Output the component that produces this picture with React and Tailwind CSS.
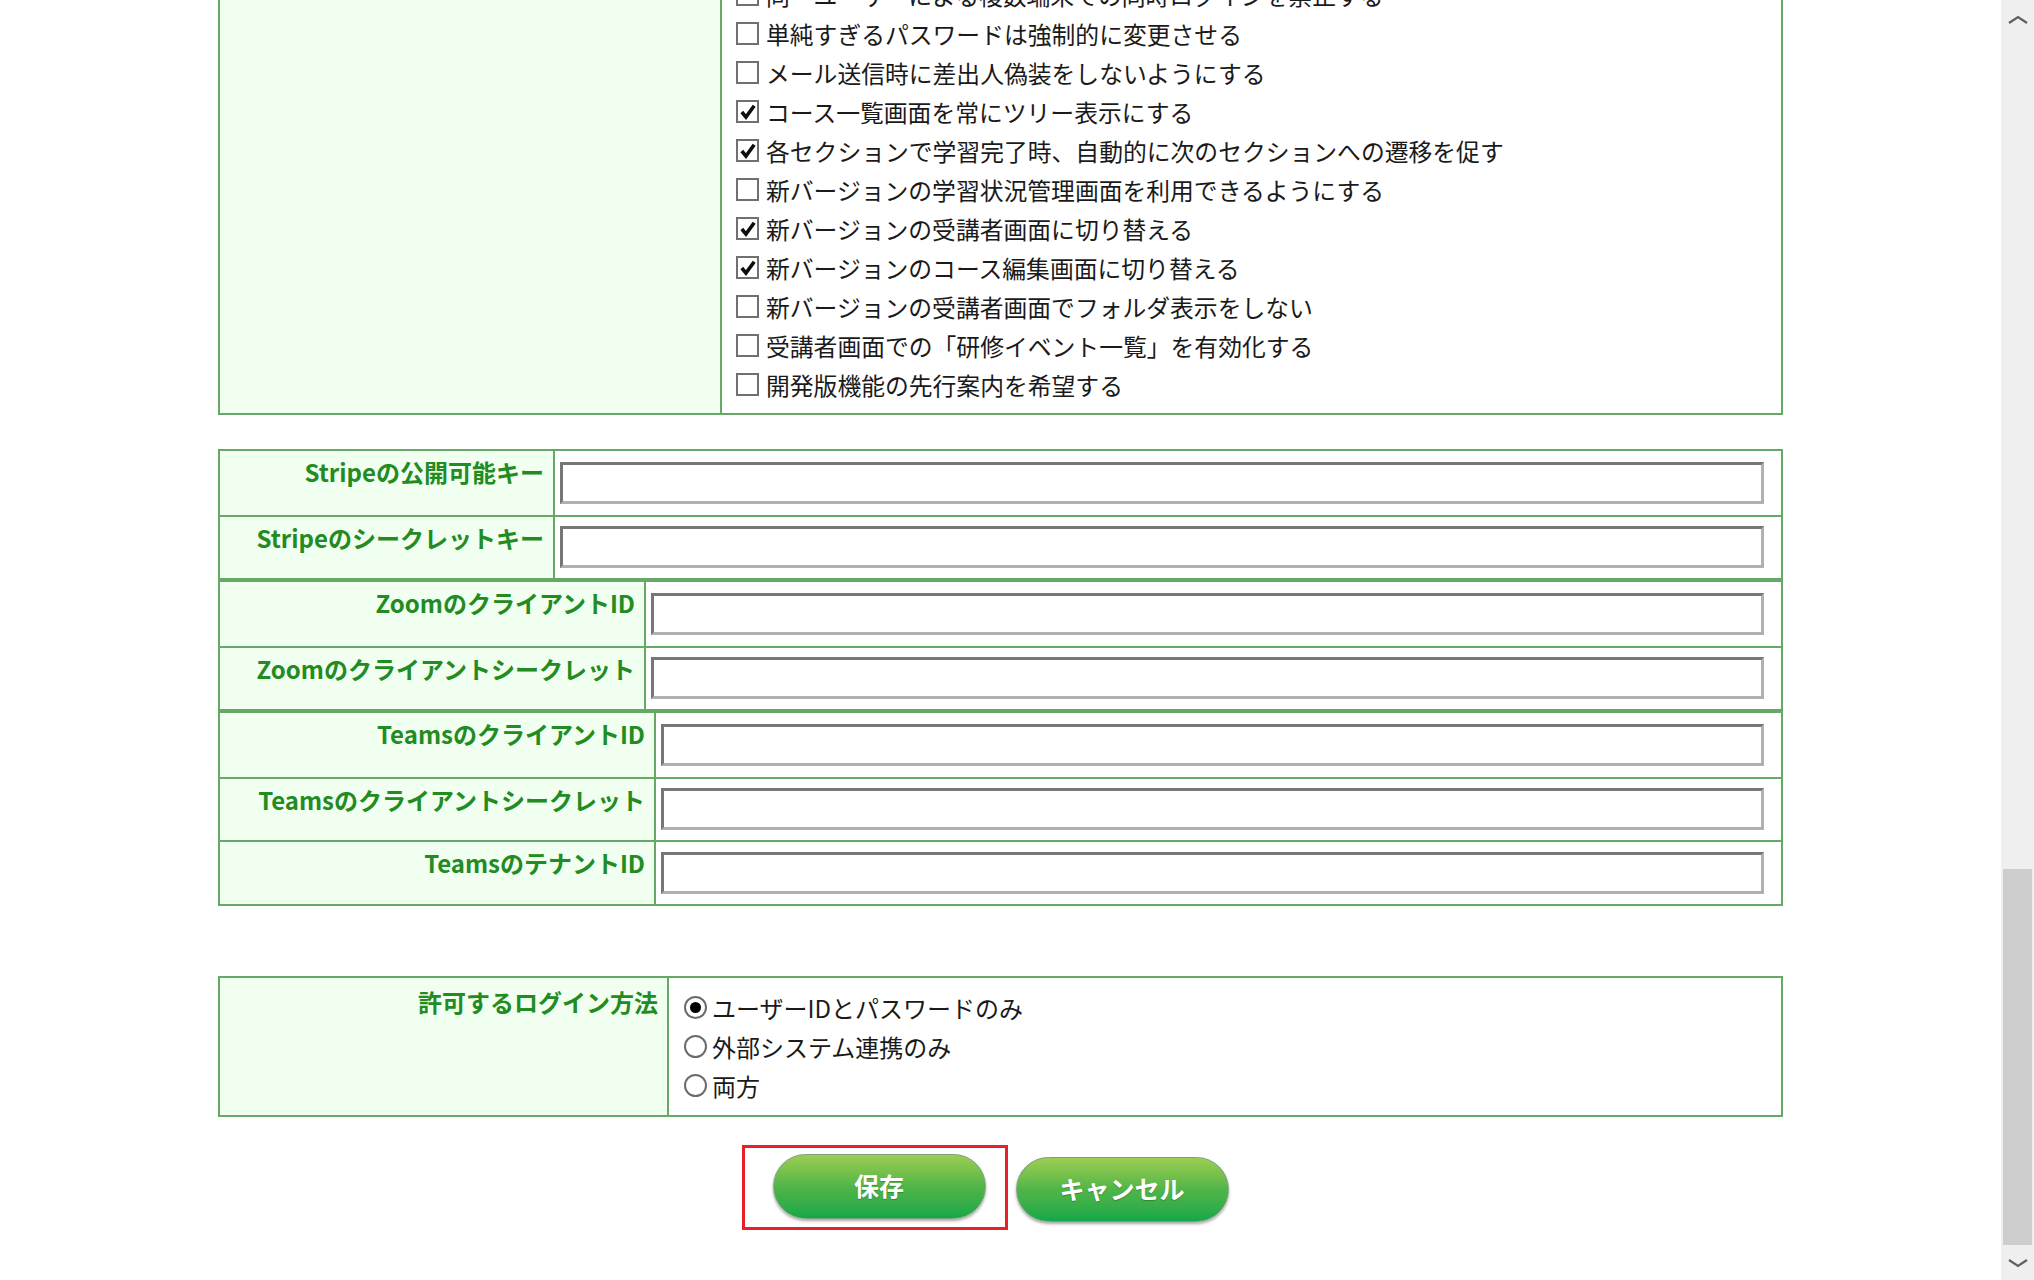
import React from 'react';

const options = [
  ['同一ユーザーによる複数端末での同時ログインを禁止する', false],
  ['単純すぎるパスワードは強制的に変更させる', false],
  ['メール送信時に差出人偽装をしないようにする', false],
  ['コース一覧画面を常にツリー表示にする', true],
  ['各セクションで学習完了時、自動的に次のセクションへの遷移を促す', true],
  ['新バージョンの学習状況管理画面を利用できるようにする', false],
  ['新バージョンの受講者画面に切り替える', true],
  ['新バージョンのコース編集画面に切り替える', true],
  ['新バージョンの受講者画面でフォルダ表示をしない', false],
  ['受講者画面での「研修イベント一覧」を有効化する', false],
  ['開発版機能の先行案内を希望する', false]
];

const keyTables = [
  { cols: 'grid-cols-[335px_1fr]', rows: ['Stripeの公開可能キー', 'Stripeのシークレットキー'] },
  { cols: 'grid-cols-[426px_1fr]', rows: ['ZoomのクライアントID', 'Zoomのクライアントシークレット'] },
  { cols: 'grid-cols-[436px_1fr]', rows: ['TeamsのクライアントID', 'Teamsのクライアントシークレット', 'TeamsのテナントID'] }
];

const logins = ['ユーザーIDとパスワードのみ', '外部システム連携のみ', '両方'];

function CheckBox({ checked }) {
  return (
    <span className="flex h-[23px] w-[23px] shrink-0 items-center justify-center border-2 border-[#707070] bg-white">
      {checked ? (
        <svg viewBox="0 0 16 16" className="h-[18px] w-[18px]">
          <path d="M2.5 8 L6.2 12.5 L13.5 2.5" fill="none" stroke="#0d0d0d" strokeWidth="3.2" />
        </svg>
      ) : null}
    </span>
  );
}

function Radio({ checked }) {
  return (
    <span className="flex h-[23px] w-[23px] shrink-0 items-center justify-center rounded-full border-2 border-[#6b6b6b] bg-white">
      {checked ? <span className="h-[11px] w-[11px] rounded-full bg-black" /> : null}
    </span>
  );
}

function KeyTable({ cols, rows }) {
  return (
    <div className="border-2 border-[#66a866]">
      {rows.map((label, i) => (
        <div key={label} className={`grid ${cols} h-[63.5px] ${i > 0 ? 'border-t-2 border-[#66a866]' : ''}`}>
          <div className="border-r-2 border-[#66a866] bg-[#f0fff0] pr-[9px] pt-[4px] text-right text-[24px] font-bold leading-[34px] text-[#228b22]">
            {label}
          </div>
          <div className="flex items-center pl-[5px] pr-[17px]">
            <input className="h-[42px] w-full border-[3px] border-t-[#767676] border-l-[#767676] border-b-[#b0b0b0] border-r-[#b0b0b0] bg-white outline-none" />
          </div>
        </div>
      ))}
    </div>
  );
}

function GreenButton({ children }) {
  return (
    <button className="h-[65px] w-[213px] rounded-full border border-[#7f9f7f] bg-gradient-to-b from-[#9ccd52] via-[#4fb548] to-[#0fa84a] text-[25px] font-bold text-white shadow-[0_2px_3px_rgba(0,0,0,0.35)] [text-shadow:0_1px_1px_rgba(0,0,0,0.25)]">
      {children}
    </button>
  );
}

export default function App() {
  return (
    <div className="flex h-[1280px] w-full overflow-hidden bg-white font-['Noto_Sans_CJK_JP','Noto_Sans',sans-serif] text-[#1a1a1a]">
      <main className="h-[1280px] flex-1 overflow-hidden">
        <div className="mx-auto mt-[-42px] w-[1565px]">
          <div className="grid grid-cols-[502px_1fr] border-2 border-[#66a866]">
            <div className="border-r-2 border-[#66a866] bg-[#f0fff0]" />
            <div className="pb-[9px] pl-[14px] pt-[15px]">
              {options.map(([text, checked]) => (
                <div key={text} className="flex h-[39px] items-center gap-[7px]">
                  <CheckBox checked={checked} />
                  <span className="text-[23.8px] leading-[39px]">{text}</span>
                </div>
              ))}
            </div>
          </div>

          <div className="mt-[34px]">
            {keyTables.map((t) => (
              <KeyTable key={t.cols} cols={t.cols} rows={t.rows} />
            ))}
          </div>

          <div className="mt-[70px] grid grid-cols-[449px_1fr] border-2 border-[#66a866]">
            <div className="border-r-2 border-[#66a866] bg-[#f0fff0] pr-[9px] pt-[7px] text-right text-[24px] font-bold leading-[34px] text-[#228b22]">
              許可するログイン方法
            </div>
            <div className="pb-[10px] pl-[15px] pt-[10px]">
              {logins.map((text, i) => (
                <div key={text} className="flex h-[39px] items-center gap-[5px]">
                  <Radio checked={i === 0} />
                  <span className="text-[24px] leading-[39px]">{text}</span>
                </div>
              ))}
            </div>
          </div>

          <div className="mt-[37px] flex items-start justify-center gap-[30px]">
            <div className="relative">
              <GreenButton>保存</GreenButton>
              <div className="pointer-events-none absolute bottom-[-11px] left-[-31px] right-[-22px] top-[-9px] border-[3px] border-[#e8202a]" />
            </div>
            <div className="mt-[3px]">
              <GreenButton>キャンセル</GreenButton>
            </div>
          </div>
        </div>
      </main>

      <aside className="flex h-[1280px] w-[33px] shrink-0 flex-col bg-[#efefef]">
        <div className="flex h-[40px] items-center justify-center">
          <svg viewBox="0 0 20 10" className="h-[10px] w-[20px]">
            <path d="M1 8 L10 2 L19 8" fill="none" stroke="#606060" strokeWidth="2.2" />
          </svg>
        </div>
        <div className="flex-1" />
        <div className="mx-[2px] h-[376px] bg-[#cdcdcd]" />
        <div className="flex h-[35px] items-center justify-center">
          <svg viewBox="0 0 20 10" className="h-[10px] w-[20px]">
            <path d="M1 2 L10 8 L19 2" fill="none" stroke="#606060" strokeWidth="2.2" />
          </svg>
        </div>
      </aside>
    </div>
  );
}
